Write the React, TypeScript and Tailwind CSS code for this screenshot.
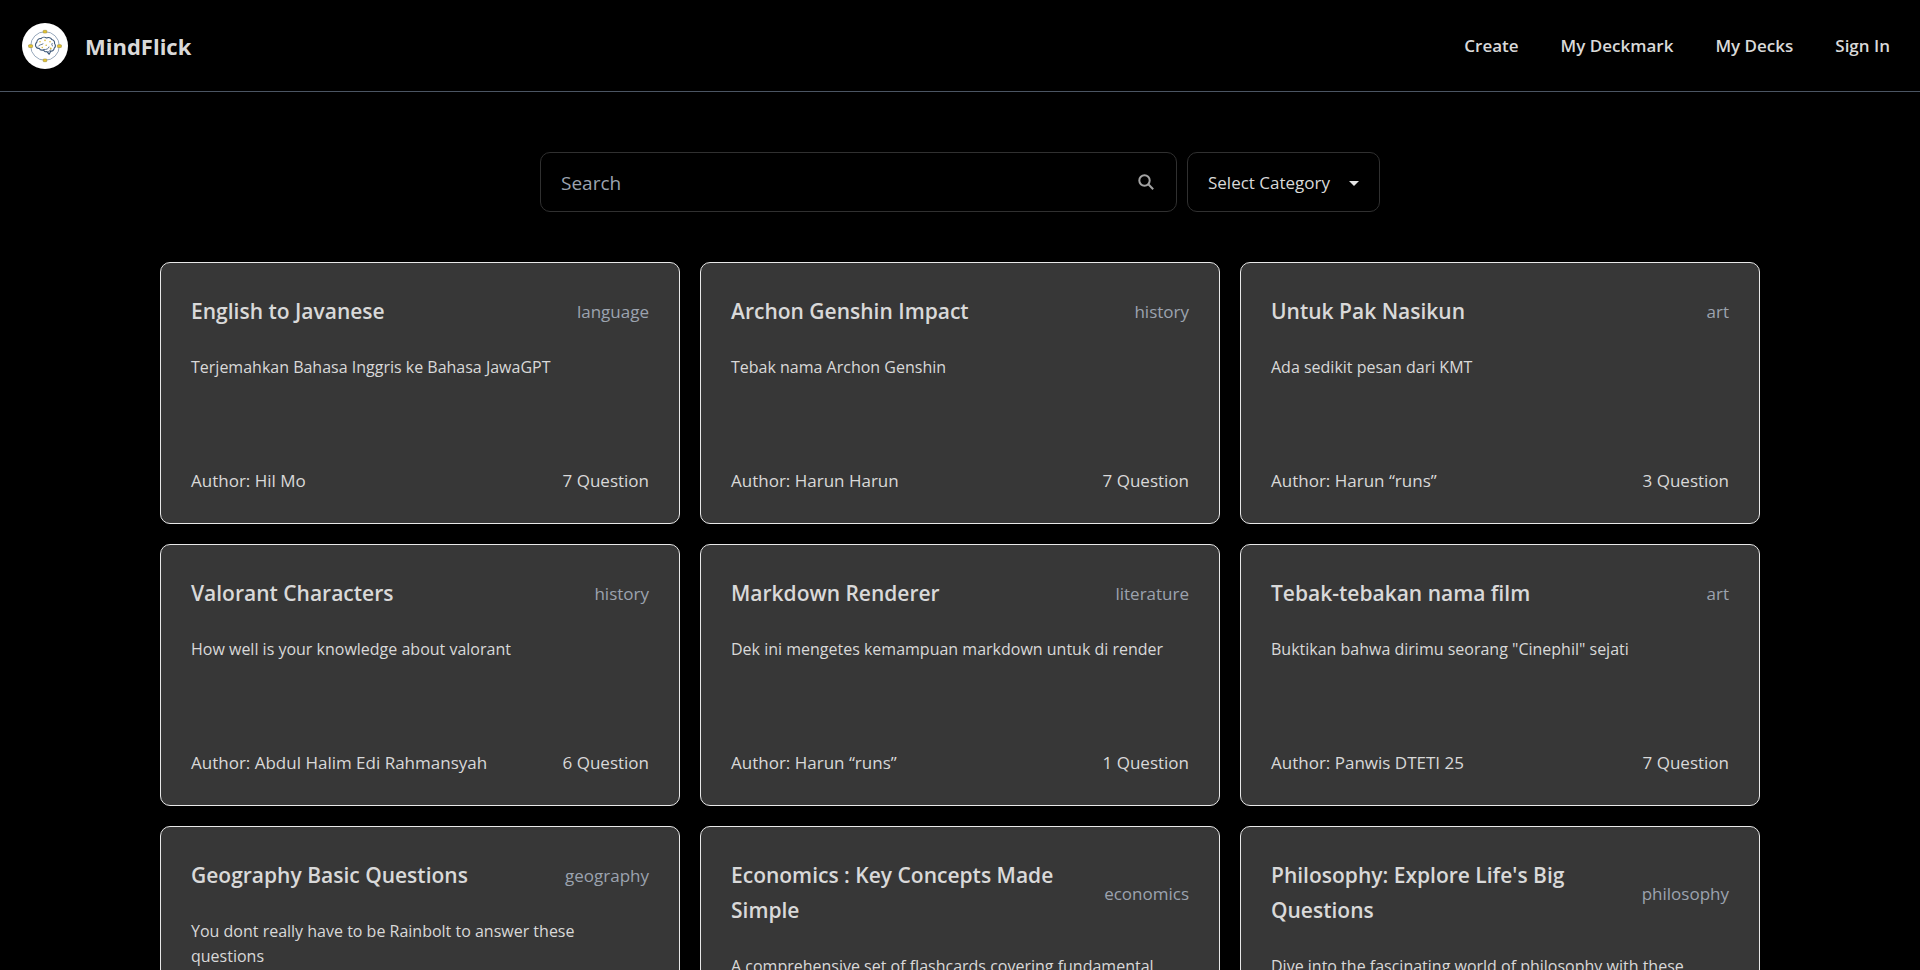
import React from "react";

type Deck = {
  title: string;
  category: string;
  description: string;
  author?: string;
  questions?: number;
};

const decks: Deck[] = [
  { title: "English to Javanese", category: "language", description: "Terjemahkan Bahasa Inggris ke Bahasa JawaGPT", author: "Hil Mo", questions: 7 },
  { title: "Archon Genshin Impact", category: "history", description: "Tebak nama Archon Genshin", author: "Harun Harun", questions: 7 },
  { title: "Untuk Pak Nasikun", category: "art", description: "Ada sedikit pesan dari KMT", author: "Harun “runs”", questions: 3 },
  { title: "Valorant Characters", category: "history", description: "How well is your knowledge about valorant", author: "Abdul Halim Edi Rahmansyah", questions: 6 },
  { title: "Markdown Renderer", category: "literature", description: "Dek ini mengetes kemampuan markdown untuk di render", author: "Harun “runs”", questions: 1 },
  { title: "Tebak-tebakan nama film", category: "art", description: 'Buktikan bahwa dirimu seorang "Cinephil" sejati', author: "Panwis DTETI 25", questions: 7 },
  { title: "Geography Basic Questions", category: "geography", description: "You dont really have to be Rainbolt to answer these questions" },
  { title: "Economics : Key Concepts Made Simple", category: "economics", description: "A comprehensive set of flashcards covering fundamental" },
  { title: "Philosophy: Explore Life's Big Questions", category: "philosophy", description: "Dive into the fascinating world of philosophy with these" },
];

const navLinks = ["Create", "My Deckmark", "My Decks", "Sign In"];

function Logo() {
  return (
    <svg viewBox="0 0 46 46" className="size-[46px] shrink-0" aria-hidden="true">
      <circle cx="23" cy="23" r="23" fill="#fff" />
      <circle cx="23" cy="23" r="14.3" fill="none" stroke="#7d93ab" strokeWidth="0.8" />
      <g fill="#e6c52f" stroke="#8f8038" strokeWidth="0.5">
        <rect x="21.200" y="7.300" width="3.600" height="2.800" rx="0.6" />
        <rect x="21.200" y="35.900" width="3.600" height="2.800" rx="0.6" />
        <rect x="6.600" y="21.700" width="4" height="2.800" rx="0.6" />
        <rect x="35.400" y="21.700" width="4" height="2.800" rx="0.6" />
      </g>
      <g fill="none" stroke="#3d5878" strokeWidth="1.100" strokeLinecap="round" strokeLinejoin="round">
        <path d="M14.500 24.500C13 22.800 13.200 20.400 14.800 19.200C14.900 16.700 16.900 15.200 19 15.600C20.500 14 23 13.900 24.400 15C26.500 14.100 29 14.900 29.800 16.500C31.700 17 32.800 18.700 32.500 20.500C33.600 21.900 33.500 24 32.200 25.200C32 27.200 30.400 28.400 28.800 28.100L27.200 31.300L25 28.600C23.300 29 21.900 28.200 21.600 26.900C19.400 27.400 17.700 26.600 17.300 25.300C16.200 25.500 15.200 25.200 14.500 24.500Z" />
        <path d="M16.300 23.200C17.600 21.300 19.500 22 21 20.900M22 26.500C24.500 26.800 26.500 25.800 27 24M26 29.300L29 26.600M30.200 20.300C29.300 21.400 29.800 22.500 30.700 23.100" strokeWidth="0.8" />
      </g>
      <g fill="#d9bd3c">
        <circle cx="18" cy="18.700" r="0.8" />
        <circle cx="23" cy="17.400" r="0.8" />
        <circle cx="28" cy="18.700" r="0.8" />
        <circle cx="24.200" cy="22.300" r="0.8" />
        <circle cx="20.300" cy="24.500" r="0.8" />
        <circle cx="28.700" cy="25.300" r="0.9" />
      </g>
    </svg>
  );
}

function DeckCard({ deck }: { deck: Deck }) {
  return (
    <article className="flex min-h-[262px] flex-col rounded-[10px] border border-[#e8e8e8] bg-[#373737] px-[30px] pt-[31px] pb-[30px]">
      <div className="flex items-center justify-between gap-10">
        <h2 className="text-[21px] leading-[35px] font-semibold">{deck.title}</h2>
        <span className="text-[17px] leading-[25px] text-[#9ca3af]">{deck.category}</span>
      </div>
      <p className="mt-[26px] text-base leading-[25px]">{deck.description}</p>
      {deck.author && (
        <div className="mt-auto flex justify-between text-[17px] leading-[25px]">
          <span>Author: {deck.author}</span>
          <span>{deck.questions} Question</span>
        </div>
      )}
    </article>
  );
}

export default function App() {
  return (
    <div className="h-screen overflow-hidden bg-black font-['Open_Sans',sans-serif] text-[#d9d9d9]">
      <header className="flex items-center justify-between border-b border-[#4b5563] pt-[23px] pr-[30px] pb-[22px] pl-[22px]">
        <a href="#" className="flex items-center gap-[17px]">
          <Logo />
          <span className="text-[22px] leading-[30px] font-bold">MindFlick</span>
        </a>
        <nav className="flex items-center gap-[42px] text-[17px] font-semibold">
          {navLinks.map((label) => (
            <a key={label} href="#">
              {label}
            </a>
          ))}
        </nav>
      </header>

      <main className="px-40 pt-[60px]">
        <form className="mx-auto flex h-[60px] max-w-[840px] gap-2.5">
          <label className="flex flex-1 items-center rounded-[10px] border border-[#303030] px-5">
            <input
              type="search"
              aria-label="Search"
              placeholder="Search"
              className="min-w-0 flex-1 bg-transparent pt-0.5 text-[19px] outline-none placeholder:text-[#9ca3af]"
            />
            <svg viewBox="0 0 18 18" className="size-[18px]" fill="none" stroke="#a3a3a3" strokeWidth="2" aria-hidden="true">
              <circle cx="6.500" cy="7.500" r="5.200" />
              <path d="M10.300 11.300l4.900 4.900" />
            </svg>
          </label>
          <div className="relative w-[193px]">
            <select
              aria-label="Category"
              className="h-full w-full appearance-none rounded-[10px] border border-[#303030] bg-black px-5 pt-0.5 text-[17px] outline-none"
            >
              <option>Select Category</option>
            </select>
            <svg viewBox="0 0 10 5" className="pointer-events-none absolute top-[29px] right-[21px] h-[5px] w-[10px]" fill="#e5e5e5" aria-hidden="true">
              <path d="M0 0h10l-5 5z" />
            </svg>
          </div>
        </form>

        <section className="mt-[50px] grid grid-cols-3 gap-5">
          {decks.map((deck) => (
            <DeckCard key={deck.title} deck={deck} />
          ))}
        </section>
      </main>
    </div>
  );
}
